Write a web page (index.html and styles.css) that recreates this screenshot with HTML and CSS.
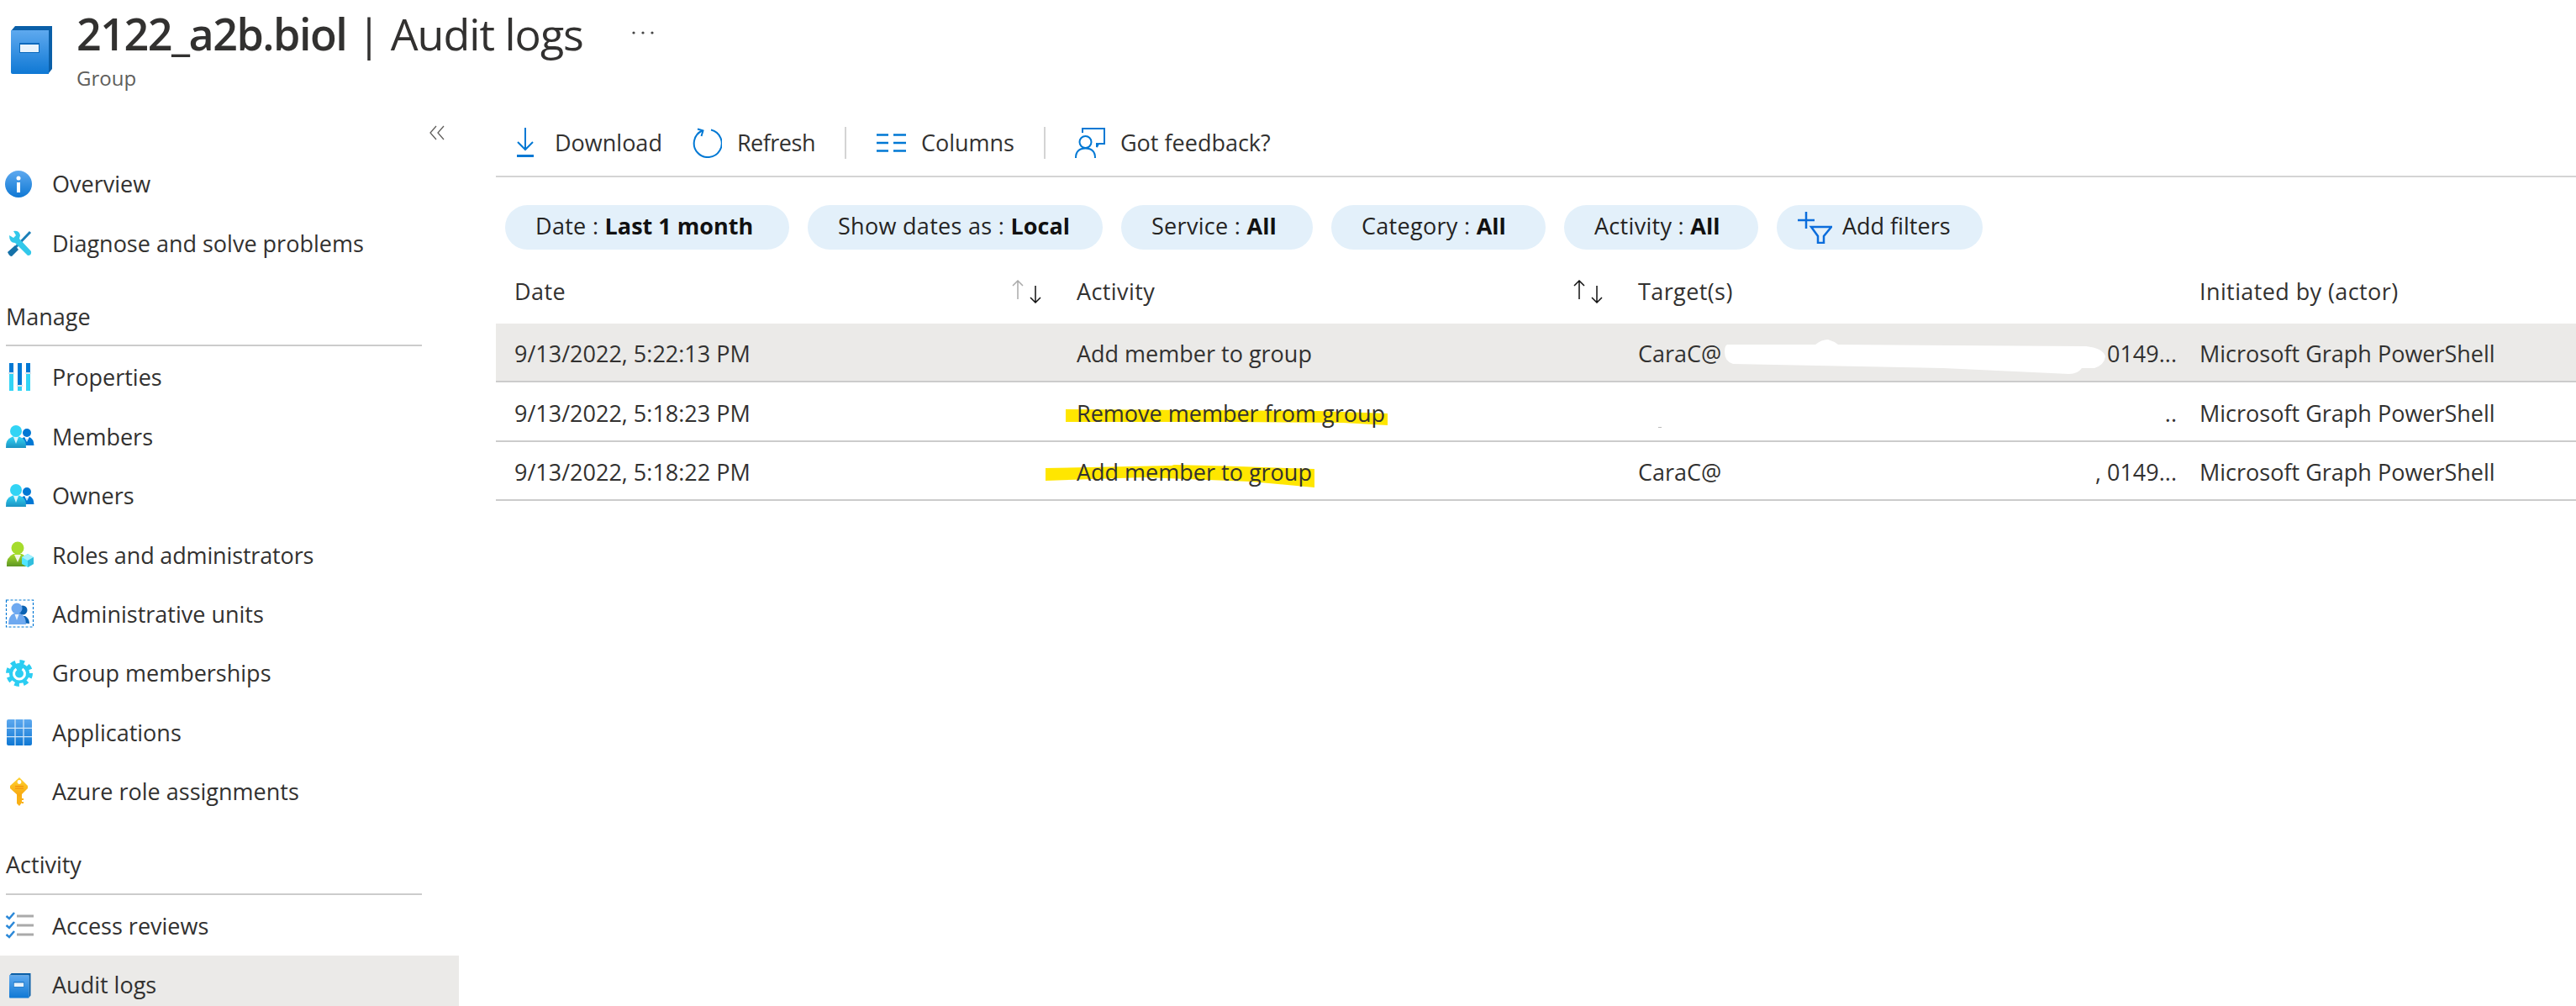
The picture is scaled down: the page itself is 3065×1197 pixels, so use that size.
FILE: index.html
```html
<!DOCTYPE html>
<html lang="en">
<head>
<meta charset="utf-8">
<title>2122_a2b.biol | Audit logs</title>
<link rel="stylesheet" href="styles.css">
</head>
<body>
<svg class="defs" width="0" height="0" aria-hidden="true">
  <defs>
    <linearGradient id="gBlue" x1="0" y1="0" x2="0" y2="1"><stop offset="0" stop-color="#5ea9ef"/><stop offset="1" stop-color="#0f78d4"/></linearGradient>
    <linearGradient id="gCyan" x1="0" y1="0" x2="0" y2="1"><stop offset="0" stop-color="#32d4f5"/><stop offset="1" stop-color="#1b93c2"/></linearGradient>
    <linearGradient id="gGreen" x1="0" y1="0" x2="0" y2="1"><stop offset="0" stop-color="#a6dc2c"/><stop offset="1" stop-color="#5e9624"/></linearGradient>
    <linearGradient id="gKey" x1="0" y1="0" x2="0" y2="1"><stop offset="0" stop-color="#ffd22e"/><stop offset="1" stop-color="#f7a50f"/></linearGradient>
    <symbol id="book" viewBox="0 0 50 58">
      <path d="M0 7 L5 1 H49 V52 L45 57 V6 H3 Z" fill="#0a5fa8"/>
      <path d="M0 6 H45 V58 H2 Q0 58 0 56 Z" fill="url(#gBlue)"/>
      <rect x="10" y="21" width="24" height="12" fill="#0a69bd"/>
      <rect x="11" y="23" width="22" height="9" fill="#e8f3fc"/>
    </symbol>
    <symbol id="people" viewBox="0 0 36 36">
      <circle cx="26" cy="13" r="5" fill="#0078d4"/>
      <path d="M19 28 V21 Q21 18.500 23 18 L26 23 L29 18 Q34 20 34.500 28 Z" fill="#0078d4"/>
      <path d="M24 20 H28 L26 24 Z" fill="#c3e3fa"/>
      <circle cx="13" cy="11" r="7" fill="#32d4f5"/>
      <path d="M1 31 Q0 21 9 17.500 H17 Q26 21 25 31 Z" fill="url(#gCyan)"/>
      <path d="M10 18 H16 L13 26 Z" fill="#dff6fc"/>
    </symbol>
  </defs>
</svg>

<header class="page-head">
  <svg class="head-icon"><use href="#book"/></svg>
  <div class="head-text">
    <div class="title-row">
      <h1 class="title"><span class="title-name">2122_a2b.biol</span> | Audit logs</h1>
      <svg class="more" viewBox="0 0 26 4"><circle cx="2" cy="2" r="1.600"/><circle cx="13" cy="2" r="1.600"/><circle cx="24" cy="2" r="1.600"/></svg>
    </div>
    <div class="subtitle">Group</div>
  </div>
</header>

<div class="main">
  <aside class="sidebar">
    <div class="collapse">
      <svg class="chev" viewBox="0 0 18 18"><path d="M8 1 L1 9 L8 17 M17 1 L10 9 L17 17"/></svg>
    </div>
    <nav class="nav">
      <a class="nav-item"><svg class="nav-icon" viewBox="0 0 36 36"><circle cx="16" cy="18" r="16" fill="url(#gBlue)"/><circle cx="16" cy="11" r="2.500" fill="#fff"/><rect x="14" y="16" width="4" height="12" fill="#fff"/></svg><span>Overview</span></a>
      <a class="nav-item"><svg class="nav-icon" viewBox="0 0 36 36"><path d="M30 4 L7 28" stroke="#1a7fb8" stroke-width="3" fill="none"/><path d="M3 28 L12 20 L16 25 L8 33 Q5 33 3 28 Z" fill="#1571a8"/><path d="M5 8 L10 11 L13 8 L10 3 Q17 2 18 8 L17 12 L31 27 Q32 32 27 32 L12 17 Q5 17 5 8 Z" fill="#32c8ea"/></svg><span>Diagnose and solve problems</span></a>
      <h2 class="nav-head">Manage</h2>
      <a class="nav-item"><svg class="nav-icon" viewBox="0 0 36 36"><rect x="5" y="1" width="5" height="33" fill="#32d4f5"/><rect x="5" y="1" width="5" height="12" fill="#0078d4"/><rect x="15" y="1" width="5" height="33" fill="#32d4f5"/><rect x="15" y="1" width="5" height="27" fill="#0078d4"/><rect x="25" y="1" width="5" height="33" fill="#32d4f5"/><rect x="25" y="1" width="5" height="12" fill="#0078d4"/><rect x="4" y="12" width="7" height="2" fill="#d8e4ea"/><rect x="14" y="27" width="7" height="2" fill="#d8e4ea"/><rect x="24" y="12" width="7" height="2" fill="#d8e4ea"/></svg><span>Properties</span></a>
      <a class="nav-item"><svg class="nav-icon"><use href="#people"/></svg><span>Members</span></a>
      <a class="nav-item"><svg class="nav-icon"><use href="#people"/></svg><span>Owners</span></a>
      <a class="nav-item"><svg class="nav-icon" viewBox="0 0 36 36"><circle cx="15" cy="9" r="7.500" fill="#a6dc2c"/><path d="M2 31 Q1 20 10 16 H20 Q27 19 28 31 Z" fill="url(#gGreen)"/><path d="M11 17 H19 L15 26 Z" fill="#f2f8e4"/><path d="M27 16 L34 20 V28 L27 32 L20 28 V20 Z" fill="#50e6ff"/><path d="M27 16 L34 20 L27 24 L20 20 Z" fill="#a5f0fd"/><path d="M27 24 L34 20 V28 L27 32 Z" fill="#32bedd"/></svg><span class="nav-tight">Roles and administrators</span></a>
      <a class="nav-item"><svg class="nav-icon" viewBox="0 0 36 36"><rect x="1.500" y="1" width="32" height="32" fill="none" stroke="#0078d4" stroke-width="1.200" stroke-dasharray="3 2"/><circle cx="21" cy="13" r="5.500" fill="#0a62b3"/><path d="M16 28 V20 H24 Q29 23 29 29 Z" fill="#0a62b3"/><circle cx="14" cy="11" r="6.500" fill="#6ea9f0"/><path d="M4 30 Q4 20 10 17 H18 Q25 20 25 30 Z" fill="#6ea9f0"/><path d="M11.500 18 H16.500 L14 25 Z" fill="#e8f2fc"/></svg><span>Administrative units</span></a>
      <a class="nav-item"><svg class="nav-icon" viewBox="0 0 36 36"><circle cx="17" cy="18" r="12" fill="#2bcdf2"/><circle cx="17" cy="18" r="13.500" fill="none" stroke="#2bcdf2" stroke-width="5" stroke-dasharray="5.600 5"/><path d="M13.500 13 A6.500 6.500 0 1 0 20.500 13" fill="none" stroke="#fff" stroke-width="3"/></svg><span>Group memberships</span></a>
      <a class="nav-item"><svg class="nav-icon" viewBox="0 0 36 36"><rect x="2" y="2" width="30" height="31" rx="2" fill="url(#gBlue)"/><path d="M12 2 V33 M22 2 V33 M2 12.300 H32 M2 22.700 H32" stroke="#cfe5f8" stroke-width="1.300"/></svg><span>Applications</span></a>
      <a class="nav-item"><svg class="nav-icon" viewBox="0 0 36 36"><path d="M14 20 H20 V31 L17 35 L14 32 Z" fill="#f9b015"/><path d="M20 26 H22 V28 H20 Z M20 30 H22 V32 H20 Z" fill="#f9b015"/><path d="M17 1 L27 11 V14 L17 24 L6 14 V11 Z" fill="url(#gKey)"/><circle cx="17" cy="6.500" r="2.400" fill="#fff"/><path d="M12 11.500 H22 M12 14 H22" stroke="#f08a0c" stroke-width="1"/></svg><span>Azure role assignments</span></a>
      <h2 class="nav-head">Activity</h2>
      <a class="nav-item"><svg class="nav-icon" viewBox="0 0 36 36"><path d="M14 6 H34 M14 17 H34 M14 28 H34" stroke="#aaa" stroke-width="3"/><path d="M1.500 6 L5 9 L11 2 M1.500 17 L5 20 L11 13 M1.500 28 L5 31 L11 24" fill="none" stroke="#2b88d8" stroke-width="2.500"/></svg><span>Access reviews</span></a>
      <a class="nav-item nav-item-active"><svg class="nav-icon nav-icon-book"><use href="#book"/></svg><span>Audit logs</span></a>
    </nav>
  </aside>

  <main class="content">
    <div class="toolbar">
      <button class="tool tool-download"><svg class="ticon ticon-dl" viewBox="0 0 20 36"><path d="M10 0 V26 M1 17 L10 26 L19 17"/><path d="M0 33.500 H20" stroke-width="3"/></svg><span>Download</span></button>
      <button class="tool tool-refresh"><svg class="ticon" viewBox="0 0 36 36"><path d="M23 2.500 A16.500 16.500 0 1 1 12.500 3.500"/><path d="M7 1.500 L13.500 3.500 L11.500 10"/></svg><span>Refresh</span></button>
      <i class="sep"></i>
      <button class="tool"><svg class="ticon" viewBox="0 0 36 36"><path d="M1 8.500 H15 M1 18 H15 M1 27.500 H15 M21 8.500 H36 M21 18 H36 M21 27.500 H36" stroke-width="2.600"/></svg><span>Columns</span></button>
      <i class="sep"></i>
      <button class="tool"><svg class="ticon" viewBox="0 0 36 36"><path d="M9 6 V1 H35 V19 H28 L26 23 V18"/><circle cx="12.500" cy="17" r="7"/><path d="M1 36 Q1 24.500 12.500 24.500 Q24 24.500 24 36"/></svg><span>Got feedback?</span></button>
    </div>

    <div class="chips">
      <div class="chip">Date : <b>Last 1 month</b></div>
      <div class="chip">Show dates as : <b>Local</b></div>
      <div class="chip">Service : <b>All</b></div>
      <div class="chip">Category : <b>All</b></div>
      <div class="chip">Activity : <b>All</b></div>
      <div class="chip chip-add"><svg class="filter-icon" viewBox="0 0 42 38"><path d="M11 0 V20 M1 10 H21 M17 18 H41 L32 29 V37 H25 V29 Z"/></svg>Add filters</div>
    </div>

    <div class="table">
      <div class="row row-head">
        <div class="cell th"><span>Date</span><svg class="sort" viewBox="0 0 36 28"><path class="sort-off" d="M8 23 V1 M2 7 L8 1 L14 7"/><path d="M29 7 V27 M23 21 L29 27 L35 21"/></svg></div>
        <div class="cell th"><span>Activity</span><svg class="sort" viewBox="0 0 36 28"><path d="M8 23 V1 M2 7 L8 1 L14 7"/><path d="M29 7 V27 M23 21 L29 27 L35 21"/></svg></div>
        <div class="cell th"><span>Target(s)</span></div>
        <div class="cell th"><span>Initiated by (actor)</span></div>
      </div>
      <div class="row row-selected">
        <div class="cell">9/13/2022, 5:22:13 PM</div>
        <div class="cell">Add member to group</div>
        <div class="cell cell-target"><span>CaraC@</span><span>0149...</span></div>
        <div class="cell">Microsoft Graph PowerShell</div>
        <svg class="redact" viewBox="0 0 453 42"><path d="M3 6 L108 6 Q115 0 123 0 Q130 2 135 6 L430 8 Q450 10 453 20 Q452 30 440 34 L425 34 Q420 41 410 41 L260 34 L10 29 Q0 26 0 15 Q0 7 3 6 Z"/></svg>
      </div>
      <div class="row">
        <div class="cell">9/13/2022, 5:18:23 PM</div>
        <div class="cell">Remove member from group</div>
        <div class="cell cell-target"><span></span><span>..</span></div>
        <div class="cell">Microsoft Graph PowerShell</div>
        <svg class="mark mark-a" viewBox="0 0 383 20"><path d="M0 0 L300 2 L383 5 L383 19 L330 16 L200 15 L0 15 Z"/></svg>
        <i class="speck"></i>
      </div>
      <div class="row">
        <div class="cell">9/13/2022, 5:18:22 PM</div>
        <div class="cell">Add member to group</div>
        <div class="cell cell-target"><span>CaraC@</span><span>, 0149...</span></div>
        <div class="cell">Microsoft Graph PowerShell</div>
        <svg class="mark mark-b" viewBox="0 0 321 27"><path d="M0 4 L150 1 L153 0 L230 2 L320 5 L320 27 L244 20 L118 15 L0 19 Z"/></svg>
      </div>
    </div>
  </main>
</div>
</body>
</html>
```

FILE: styles.css
```css
* { box-sizing: border-box; }
html, body { margin: 0; padding: 0; }
body {
  width: 3065px;
  height: 1197px;
  overflow: hidden;
  background: #fff;
  color: #323130;
  font-family: "Open Sans", "Noto Sans", sans-serif;
  font-size: 27px;
  line-height: 36px;
}
.defs { position: absolute; }

/* Page header */
.page-head { display: flex; height: 126px; padding: 30px 0 0 13px; gap: 28px; }
.head-icon { width: 50px; height: 58px; flex: none; }
.head-text { margin-top: -30px; }
.title-row { display: flex; align-items: center; height: 80px; }
.title { margin: 0; font-size: 52px; line-height: 80px; font-weight: 400; white-space: pre; letter-spacing: -1px; }
.title-name { font-weight: 600; letter-spacing: -1.500px; }
.more { width: 26px; height: 4px; margin-left: 58px; margin-top: -2px; fill: #444; }
.subtitle { font-size: 24px; line-height: 32px; color: #605e5c; margin-top: -3px; }

/* Layout */
.main { display: flex; height: 1071px; }
.sidebar { width: 546px; flex: none; margin-right: 44px; }
.content { flex: 1; min-width: 0; }
.collapse { height: 58px; display: flex; justify-content: flex-end; padding: 23px 17px 0 0; }
.chev { width: 18px; height: 18px; fill: none; stroke: #605e5c; stroke-width: 1.300; }

/* Nav */
.nav-item { display: flex; align-items: center; height: 70.4px; padding-left: 6px; gap: 20px; white-space: nowrap; }
.nav-icon { width: 36px; height: 36px; flex: none; }
.nav-icon-book { width: 26px; height: 31px; margin: 0 5px; }
.nav-tight { letter-spacing: -0.150px; }
.nav-item-active { background: #ebeae8; }
.nav-head {
  margin: 0 44px 2px 7px;
  height: 87.500px;
  padding-top: 34px;
  font-size: 27px;
  line-height: 36px;
  font-weight: 500;
  border-bottom: 2px solid #ccc;
}

/* Toolbar */
.toolbar { display: flex; align-items: center; gap: 35px; height: 85px; padding: 5px 0 0 25px; border-bottom: 2px solid #d4d4d4; }
.tool { display: flex; align-items: center; gap: 18px; padding: 0; border: 0; background: none; font: inherit; color: inherit; white-space: nowrap; }
.ticon { width: 36px; height: 36px; fill: none; stroke: #0078d4; stroke-width: 2; flex: none; }
.ticon-dl { width: 20px; }
.tool-download { gap: 25px; }
.tool-refresh { letter-spacing: -0.500px; }
.sep { width: 2px; height: 38px; background: #d4d4d4; }

/* Chips */
.chips { display: grid; grid-template-columns: 338px 351px 228px 255px 231px 245px; gap: 22px; margin-top: 33px; padding-left: 11px; }
.chip { display: flex; align-items: center; height: 53px; padding: 0 0 3px 36px; border-radius: 27px; background: #e3f0fa; white-space: pre; color: #252423; letter-spacing: 0.300px; }
.chip b { font-weight: 700; color: #111; letter-spacing: 0; }
.chip-add { padding-left: 24px; gap: 12px; letter-spacing: 0; }
.filter-icon { width: 42px; height: 38px; margin-top: 3px; fill: none; stroke: #0b6ddc; stroke-width: 2.500; }

/* Table */
.row { position: relative; display: grid; grid-template-columns: 669px 668px 668px 1fr; height: 70.4px; padding-top: 4px; border-bottom: 2.500px solid #ccc; align-items: center; }
.row-head { height: 88px; padding-top: 12px; border-bottom: 0; font-weight: 500; letter-spacing: 0.400px; }
.row-selected { background: #ebeae8; }
.cell { position: relative; z-index: 1; padding-left: 22px; white-space: nowrap; }
.th { display: flex; align-items: center; justify-content: space-between; padding-right: 20px; }
.cell-target { display: flex; justify-content: space-between; padding-right: 5px; }
.sort { width: 36px; height: 28px; fill: none; stroke: #111; stroke-width: 1.500; }
.sort-off { stroke: #aaa; }
.redact { position: absolute; z-index: 2; left: 1462px; top: 19px; width: 453px; height: 42px; fill: #fff; }
.mark { position: absolute; z-index: 0; fill: #ffe600; }
.mark-a { left: 678px; top: 32px; width: 383px; height: 20px; }
.mark-b { left: 654px; top: 27px; width: 321px; height: 27px; }
.speck { position: absolute; left: 1383px; top: 53px; width: 4px; height: 1px; background: #bbb; }
```
